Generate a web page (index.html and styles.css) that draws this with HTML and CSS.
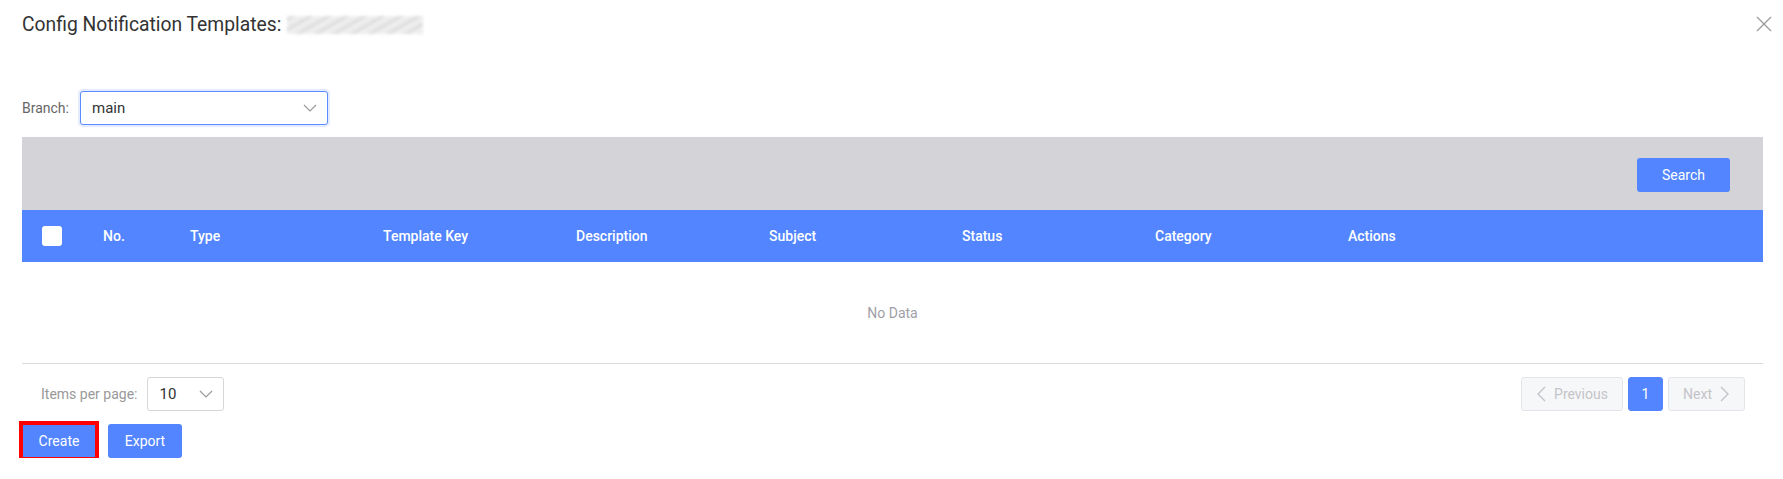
FILE: index.html
```html
<!DOCTYPE html>
<html lang="en">
<head>
    <meta charset="utf-8">
    <title>Config Notification Templates</title>
    <link rel="stylesheet" href="styles.css">
</head>
<body>
    <div class="dialog">

        <div class="dialog-header">
            <h1 class="dialog-title">Config Notification Templates: <span class="blurred"></span></h1>
            <span class="close">
                <svg width="16" height="16" viewBox="0 0 16 16"><path d="M1 1 L15 15 M15 1 L1 15" stroke="#9a9a9a" stroke-width="1.3" fill="none"/></svg>
            </span>
        </div>

        <div class="branch-row">
            <label class="field-label">Branch:</label>
            <div class="select select-branch">
                <span>main</span>
                <svg class="chevron" width="14" height="8" viewBox="0 0 14 8"><polyline points="1,1 7,7 13,1" stroke="#9a9a9a" stroke-width="1.2" fill="none"/></svg>
            </div>
        </div>

        <div class="toolbar">
            <button class="btn btn-search">Search</button>
        </div>

        <div class="grid-head">
            <div class="cell"><span class="checkbox"></span></div>
            <div class="cell">No.</div>
            <div class="cell">Type</div>
            <div class="cell">Template Key</div>
            <div class="cell">Description</div>
            <div class="cell">Subject</div>
            <div class="cell">Status</div>
            <div class="cell">Category</div>
            <div class="cell">Actions</div>
        </div>

        <div class="grid-empty">No Data</div>

        <div class="grid-footer">
            <div class="page-size">
                <span class="field-label muted">Items per page:</span>
                <div class="select select-small">
                    <span>10</span>
                    <svg class="chevron" width="14" height="8" viewBox="0 0 14 8"><polyline points="1,1 7,7 13,1" stroke="#9a9a9a" stroke-width="1.2" fill="none"/></svg>
                </div>
            </div>
            <div class="pager">
                <span class="page-btn disabled">
                    <svg width="10" height="16" viewBox="0 0 10 16"><polyline points="9,1 2,8 9,15" stroke="#c4c4c8" stroke-width="1.4" fill="none"/></svg>
                    Previous
                </span>
                <span class="page-btn current">1</span>
                <span class="page-btn disabled">
                    Next
                    <svg width="10" height="16" viewBox="0 0 10 16"><polyline points="1,1 8,8 1,15" stroke="#c4c4c8" stroke-width="1.4" fill="none"/></svg>
                </span>
            </div>
        </div>

        <div class="actions">
            <button class="btn btn-create highlighted">Create</button>
            <button class="btn">Export</button>
        </div>

    </div>
</body>
</html>
```

FILE: styles.css
```css
html {
	font-family: Roboto, "Liberation Sans", Arial, sans-serif;
}
body {
	margin: 0;
	background-color: #fff;
	color: #333;
}
.dialog {
	padding: 0 20px 0 22px;
}
.dialog-header {
	display: flex;
	align-items: flex-start;
	justify-content: space-between;
	height: 50px;
}
.dialog-title {
	display: flex;
	align-items: center;
	margin: 0;
	padding-top: 14px;
	font-size: 19.3px;
	font-weight: normal;
	color: #333;
	line-height: 22px;
}
.blurred {
	display: inline-block;
	width: 136px;
	height: 18px;
	margin-left: 6px;
	background: repeating-linear-gradient(150deg, #f2f2f2 0px, #cfcfcf 3px, #f0f0f0 6px, #e2e2e2 9px);
	filter: blur(1.5px);
	opacity: 0.8;
}
.close {
	margin-top: 16px;
	margin-right: -9px;
	width: 16px;
	height: 16px;
}
.branch-row {
	display: flex;
	align-items: center;
	margin-top: 41px;
	height: 34px;
}
.field-label {
	font-size: 14px;
	color: #666;
	margin-right: 11px;
}
.muted {
	color: #999;
	margin-right: 10px;
}
.select {
	display: flex;
	align-items: center;
	justify-content: space-between;
	box-sizing: border-box;
	height: 34px;
	padding: 0 10px 0 11px;
	border: 1px solid #d6d6da;
	border-radius: 3px;
	font-size: 15px;
	color: #333;
	background: #fff;
}
.select-branch {
	width: 248px;
	border-color: #5b8bff;
	box-shadow: 0 0 0 2px #e3ebff;
}
.select-small {
	width: 77px;
}
.chevron {
	display: block;
}
.toolbar {
	display: flex;
	justify-content: flex-end;
	align-items: center;
	margin-top: 12px;
	height: 73px;
	padding-right: 33px;
	background-color: #d4d4d8;
}
.btn {
	box-sizing: border-box;
	height: 34px;
	padding: 0 18px;
	border: none;
	border-radius: 3px;
	background-color: #5285ff;
	color: #fff;
	font-family: inherit;
	font-size: 14px;
}
.btn-search {
	width: 93px;
	margin-top: 3px;
}
.grid-head {
	display: grid;
	grid-template-columns: 61px 87px repeat(6, 193px) 1fr;
	height: 52px;
	background-color: #5285ff;
	color: #fff;
	font-size: 14px;
	font-weight: 500;
}
.cell {
	display: flex;
	align-items: center;
	padding-left: 20px;
}
.checkbox {
	width: 20px;
	height: 20px;
	border-radius: 3px;
	background: #fff;
}
.grid-empty {
	display: flex;
	align-items: center;
	justify-content: center;
	height: 101px;
	border-bottom: 1px solid #dcdce0;
	font-size: 14px;
	color: #a0a0a6;
}
.grid-footer {
	display: flex;
	justify-content: space-between;
	align-items: center;
	padding: 13px 18px 0 19px;
}
.page-size {
	display: flex;
	align-items: center;
}
.pager {
	display: flex;
	gap: 5px;
}
.page-btn {
	display: flex;
	align-items: center;
	justify-content: center;
	gap: 8px;
	box-sizing: border-box;
	height: 34px;
	border: 1px solid #e4e5e8;
	border-radius: 3px;
	background: #f6f7f9;
	font-size: 14px;
	color: #c4c4c8;
}
.page-btn.disabled:first-child {
	width: 102px;
}
.page-btn.disabled:last-child {
	width: 77px;
}
.page-btn.current {
	width: 35px;
	background: #5285ff;
	border-color: #5285ff;
	color: #fff;
}
.actions {
	display: flex;
	gap: 12px;
	margin-top: 13px;
}
.actions .btn {
	width: 74px;
	padding: 0;
}
.highlighted {
	outline: 4px solid #f00;
	outline-offset: -1px;
	border-radius: 0;
}
```
